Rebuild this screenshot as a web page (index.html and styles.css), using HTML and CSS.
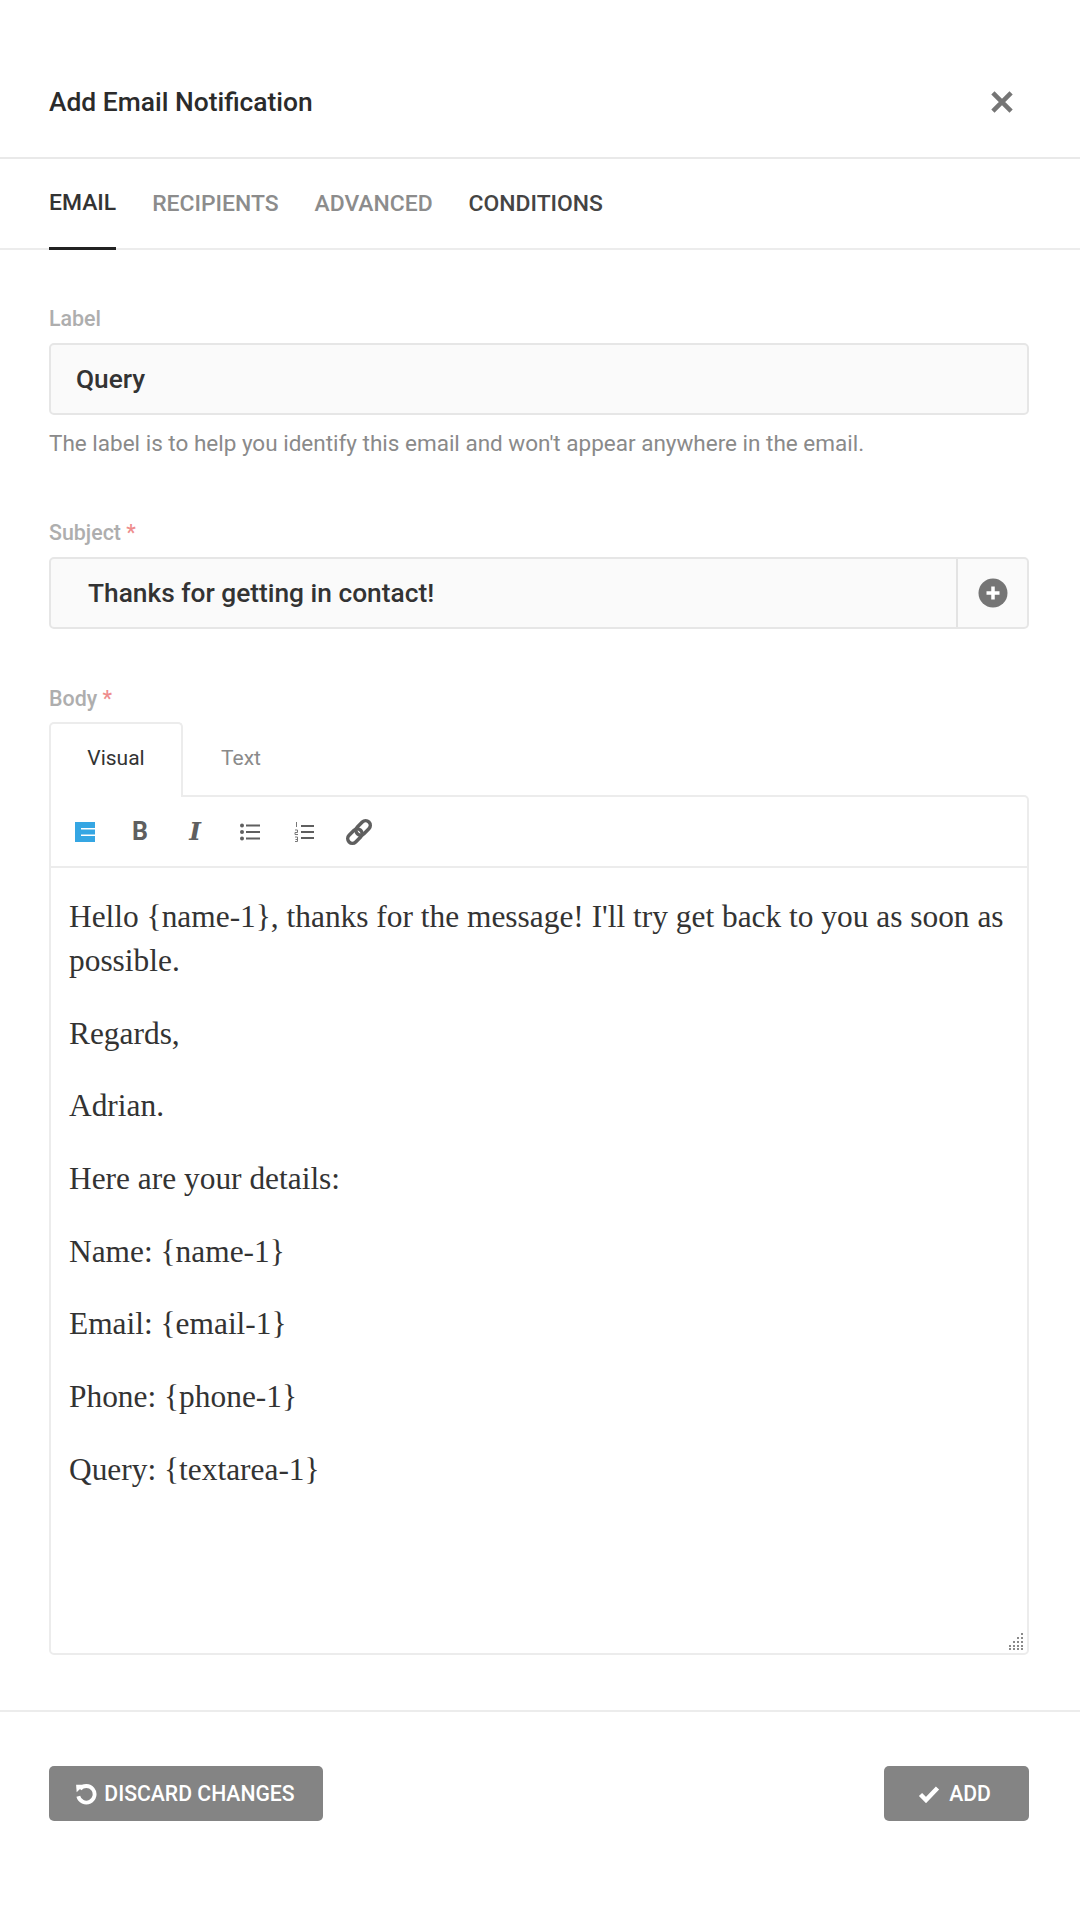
FILE: index.html
```html
<!DOCTYPE html>
<html lang="en">
<head>
<meta charset="utf-8">
<title>Add Email Notification</title>
<link rel="stylesheet" href="styles.css">
</head>
<body>
<div class="modal">
  <header class="modal-head">
    <h1 class="modal-title">Add Email Notification</h1>
    <svg class="close-icon" viewBox="0 0 20 20"><path d="M3 3L17 17M17 3L3 17"/></svg>
  </header>
  <nav class="tabs">
    <span class="tab tab-active">EMAIL</span>
    <span class="tab tab-muted">RECIPIENTS</span>
    <span class="tab tab-muted">ADVANCED</span>
    <span class="tab tab-dark">CONDITIONS</span>
  </nav>
  <main class="form">
    <section class="field field-label">
      <div class="field-name">Label</div>
      <div class="input input-plain">Query</div>
      <p class="help">The label is to help you identify this email and won't appear anywhere in the email.</p>
    </section>
    <section class="field field-subject">
      <div class="field-name">Subject <span class="req">*</span></div>
      <div class="input input-addon">
        <span class="input-text">Thanks for getting in contact!</span>
        <span class="addon">
          <svg class="plus-icon" viewBox="0 0 30 30"><circle cx="15" cy="15" r="14.5"/><path d="M15 8.5V21.500M8.500 15H21.500"/></svg>
        </span>
      </div>
    </section>
    <section class="field field-body">
      <div class="field-name">Body <span class="req">*</span></div>
      <div class="editor-tabs">
        <span class="editor-tab editor-tab-active">Visual</span>
        <span class="editor-tab">Text</span>
      </div>
      <div class="editor">
        <div class="toolbar">
          <svg class="tool tool-form" viewBox="0 0 20 20"><path d="M0 0H20V6H6V7.500H20V12.500H6V14H20V20H0Z"/></svg>
          <span class="tool-b">B</span>
          <span class="tool-i">I</span>
          <svg class="tool tool-list" viewBox="0 0 20 18"><circle cx="2" cy="2.500" r="2"/><circle cx="2" cy="9" r="2"/><circle cx="2" cy="15.500" r="2"/><path class="tool-line" d="M6 2.500H20M6 9H20M6 15.500H20"/></svg>
          <svg class="tool tool-olist" viewBox="0 0 20 20"><path class="tool-line" d="M7 4H20M7 10H20M7 16H20"/><path class="tool-thin" d="M2.500 0V5M1 8H3.500V10.500H1V12.500H4M1 15H3.500V19.500H1M1.500 17.500H3.500"/></svg>
          <svg class="tool tool-link" viewBox="0 0 24 24"><g transform="rotate(-45 12 12)"><rect class="tool-chain" x="0" y="8" width="14" height="8" rx="4"/><rect class="tool-chain" x="10" y="8" width="14" height="8" rx="4"/></g></svg>
        </div>
        <div class="editor-body">
          <p class="para">Hello {name-1}, thanks for the message! I'll try get back to you as soon as possible.</p>
          <p class="para">Regards,</p>
          <p class="para">Adrian.</p>
          <p class="para">Here are your details:</p>
          <p class="para">Name: {name-1}</p>
          <p class="para">Email: {email-1}</p>
          <p class="para">Phone: {phone-1}</p>
          <p class="para">Query: {textarea-1}</p>
          <svg class="grip" viewBox="0 0 18 18"><path d="M15 1h2v2h-2zM15 5h2v2h-2zM11 5h2v2h-2zM15 9h2v2h-2zM11 9h2v2h-2zM7 9h2v2H7zM15 13h2v2h-2zM11 13h2v2h-2zM7 13h2v2H7zM3 13h2v2H3zM15 16h2v2h-2zM11 16h2v2h-2zM7 16h2v2H7zM3 16h2v2H3z"/></svg>
        </div>
      </div>
    </section>
  </main>
  <footer class="modal-foot">
    <button class="btn btn-discard">
      <svg class="btn-icon" viewBox="0 0 20 20"><path class="undo-arc" d="M4.500 5.500A7.500 7.500 0 1 1 3 12"/><path class="undo-head" d="M1 1.500H8.500L1.500 8.500Z"/></svg>
      DISCARD CHANGES
    </button>
    <button class="btn btn-add">
      <svg class="btn-icon check-icon" viewBox="0 0 22 18"><path class="check" d="M2.500 9.500L8 15L19.500 3"/></svg>
      ADD
    </button>
  </footer>
</div>
</body>
</html>
```
FILE: styles.css
```css
* { box-sizing: border-box; }
html, body { margin: 0; padding: 0; }
body {
  width: 1080px;
  height: 1920px;
  background: #fff;
  font-family: Roboto, "Liberation Sans", sans-serif;
  color: #333;
}
.modal { display: flex; flex-direction: column; height: 1920px; }

.modal-head {
  height: 159px;
  padding: 72px 49px 0;
  display: flex;
  justify-content: space-between;
  align-items: flex-start;
  border-bottom: 2px solid #e9e9e9;
}
.modal-title {
  margin: 0;
  font-size: 26.400px;
  line-height: 60px;
  font-weight: 500;
  color: #2b2b2b;
}
.close-icon {
  width: 26px;
  height: 26px;
  margin: 17px 16px 0 0;
  fill: none;
  stroke: #757575;
  stroke-width: 3.500;
}

.tabs {
  height: 91px;
  padding: 0 49px;
  display: flex;
  gap: 36px;
  border-bottom: 2px solid #ececec;
}
.tab {
  display: flex;
  align-items: center;
  height: 91px;
  padding-bottom: 2px;
  font-size: 22.900px;
  font-weight: 500;
  color: #444;
}
.tab-active { color: #333; border-bottom: 3px solid #222; padding-top: 1px; }
.tab-muted { color: #8c8c8c; }
.tab-dark { color: #444; }

.form { padding: 0 51px 0 49px; flex: none; }
.field-name {
  font-size: 21.400px;
  font-weight: 500;
  line-height: 24px;
  color: #aeaeae;
}
.req { color: #ee8d8d; }
.field-label { padding-top: 57px; }
.field-subject { padding-top: 63px; }
.field-body { padding-top: 58px; }

.input {
  margin-top: 12px;
  height: 72px;
  border: 2px solid #e6e6e6;
  border-radius: 5px;
  background: #fafafa;
  font-size: 26.300px;
  font-weight: 500;
  color: #333;
}
.input-plain { display: flex; align-items: center; padding-left: 25px; padding-bottom: 1px; }
.help {
  margin: 13px 0 0;
  font-size: 22.500px;
  line-height: 30px;
  color: #8a8a8a;
}
.input-addon { display: flex; align-items: stretch; }
.input-text { flex: 1; display: flex; align-items: center; padding-left: 37px; }
.addon {
  width: 71px;
  border-left: 2px solid #e3e3e3;
  display: flex;
  align-items: center;
  justify-content: center;
}
.plus-icon { width: 30px; height: 30px; }
.plus-icon circle { fill: #757575; }
.plus-icon path { stroke: #fff; stroke-width: 3.500; fill: none; }

.editor-tabs { display: flex; margin-top: 11px; margin-bottom: -2px; height: 75px; }
.editor-tab {
  width: 134px;
  display: flex;
  align-items: center;
  justify-content: center;
  padding-bottom: 6px;
  font-size: 21px;
  color: #8a8a8a;
  border: 2px solid transparent;
  border-bottom: 0;
}
.editor-tab-active {
  color: #333;
  background: #fff;
  border-color: #ececec;
  border-radius: 5px 5px 0 0;
  position: relative;
  z-index: 1;
}
.editor-tab + .editor-tab { width: 116px; }

.editor {
  height: 860px;
  border: 2px solid #ececec;
  border-radius: 0 5px 5px 5px;
  display: flex;
  flex-direction: column;
}
.toolbar {
  height: 71px;
  flex: none;
  padding-left: 24px;
  border-bottom: 2px solid #ececec;
  display: flex;
  align-items: center;
}
.tool { display: block; flex: none; }
.tool-form { width: 20px; height: 20px; fill: #35a6e3; margin-right: 35px; }
.tool-b {
  width: 20px;
  margin-right: 35px;
  text-align: center;
  font-size: 25px;
  font-weight: 700;
  color: #5f5f5f;
}
.tool-i {
  width: 20px;
  margin-right: 35px;
  text-align: center;
  font-family: "DejaVu Serif", "Liberation Serif", serif;
  font-style: italic;
  font-size: 25px;
  font-weight: 700;
  color: #5f5f5f;
}
.tool-list { width: 20px; height: 18px; fill: #5f5f5f; margin-right: 34px; }
.tool-olist { width: 20px; height: 20px; margin-right: 31px; }
.tool-line { stroke: #5f5f5f; stroke-width: 2; fill: none; }
.tool-thin { stroke: #777; stroke-width: 1; fill: none; }
.tool-link { width: 28px; height: 28px; }
.tool-chain { fill: none; stroke: #5f5f5f; stroke-width: 3; }

.editor-body {
  flex: 1;
  position: relative;
  padding: 27px 14px 0 18px;
}
.para {
  margin: 0 0 28.700px;
  font-family: "Liberation Serif", "DejaVu Serif", serif;
  font-size: 31.400px;
  line-height: 44px;
  color: #333;
}
.grip {
  position: absolute;
  right: 3px;
  bottom: 3px;
  width: 18px;
  height: 18px;
  fill: #8a8a8a;
}

.modal-foot {
  margin-top: 55px;
  border-top: 2px solid #ececec;
  padding: 54px 51px 0 49px;
  display: flex;
  justify-content: space-between;
}
.btn {
  height: 55px;
  border: 0;
  border-radius: 5px;
  background: #848484;
  color: #fff;
  font-family: Roboto, "Liberation Sans", sans-serif;
  font-size: 21.200px;
  font-weight: 500;
  display: flex;
  align-items: center;
  justify-content: center;
  padding: 0;
}
.btn-discard { width: 274px; gap: 7px; padding-right: 2px; }
.btn-add { width: 145px; gap: 9px; padding-right: 4px; }
.btn-icon { width: 22px; height: 22px; flex: none; }
.check-icon { width: 22px; height: 18px; }
.undo-arc { fill: none; stroke: #fff; stroke-width: 3.500; }
.undo-head { fill: #fff; }
.check { fill: none; stroke: #fff; stroke-width: 4.500; }
```
